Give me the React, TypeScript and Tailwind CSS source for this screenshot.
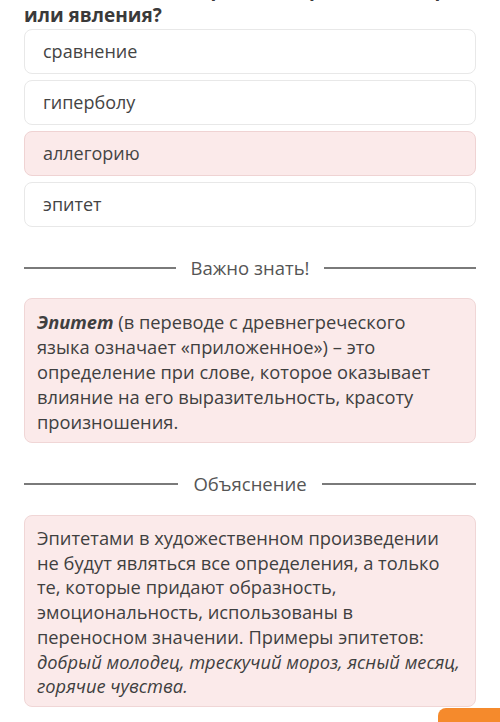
import React from "react";

function Divider({ label }: { label: string }) {
  return (
    <div className="flex items-center">
      <div className="h-[2px] flex-1 bg-[#7a7a7a]" />
      <div className="px-[15px] text-[18.5px] leading-[25px] text-[#555555]">{label}</div>
      <div className="h-[2px] flex-1 bg-[#7a7a7a]" />
    </div>
  );
}

function Lines({ lines }: { lines: React.ReactNode[] }) {
  return (
    <>
      {lines.map((l, i) => (
        <span key={i} className="block whitespace-nowrap">
          {l}
        </span>
      ))}
    </>
  );
}

export default function App() {
  const options = [
    { t: "сравнение", wrong: false },
    { t: "гиперболу", wrong: false },
    { t: "аллегорию", wrong: true },
    { t: "эпитет", wrong: false },
  ];
  return (
    <div className="relative min-h-[722px] overflow-hidden bg-white px-6 font-['Open_Sans',sans-serif] text-[#3d3d3d]">
      <h2 className="mt-[-24px] text-[19px] font-bold leading-[26px] text-[#3a3a3a]">
        <span className="whitespace-nowrap">Как называется образное определение предмета</span>
        <br />
        или явления?
      </h2>
      <div className="mt-[1px] flex flex-col gap-[6px]">
        {options.map((o) => (
          <div
            key={o.t}
            className={
              o.wrong
                ? "flex h-[45px] items-center rounded-lg border border-[#efd3d3] bg-[#fbeaea] px-[18px] text-[18px] text-[#444444]"
                : "flex h-[45px] items-center rounded-lg border border-[#e8e8e8] bg-white px-[18px] text-[18px] text-[#444444]"
            }
          >
            {o.t}
          </div>
        ))}
      </div>
      <div className="mt-[28px]">
        <Divider label="Важно знать!" />
      </div>
      <div className="mt-[18px] rounded-lg border border-[#f0d6d6] bg-[#fbeaea] px-3 pb-[8px] pt-[10px] text-[18.3px] leading-[25px] text-[#3f3f3f]">
        <Lines
          lines={[
            <>
              <b className="italic">Эпитет</b> (в переводе с древнегреческого
            </>,
            "языка означает «приложенное») – это",
            "определение при слове, которое оказывает",
            "влияние на его выразительность, красоту",
            "произношения.",
          ]}
        />
      </div>
      <div className="mt-[28px]">
        <Divider label="Объяснение" />
      </div>
      <div className="mt-[19px] rounded-lg border border-[#f0d6d6] bg-[#fbeaea] px-3 pb-[7px] pt-[10px] text-[18.3px] leading-[24.7px] text-[#3f3f3f]">
        <Lines
          lines={[
            "Эпитетами в художественном произведении",
            "не будут являться все определения, а только",
            "те, которые придают образность,",
            "эмоциональность, использованы в",
            "переносном значении. Примеры эпитетов:",
            <i>добрый молодец, трескучий мороз, ясный месяц,</i>,
            <i>горячие чувства.</i>,
          ]}
        />
      </div>
      <div className="absolute left-[438px] top-[708px] h-[30px] w-[70px] rounded-tl-lg bg-[#f58a2c]" />
    </div>
  );
}
